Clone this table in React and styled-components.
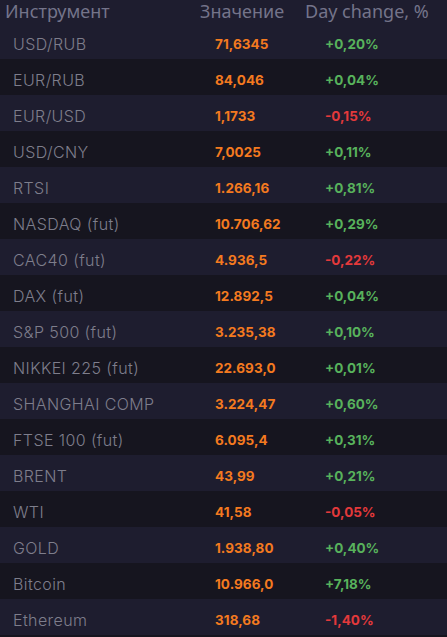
import React from "react";
import styled, { createGlobalStyle } from "styled-components";

const Global = createGlobalStyle`
  html, body { margin: 0; padding: 0; background: #16151f; }
  body { width: 447px; height: 637px; overflow: hidden; }
`;

const Table = styled.div`
  display: flex;
  flex-direction: column;
  width: 447px;
  background: #16151f;
`;

const Header = styled.div`
  display: grid;
  grid-template-columns: 195px 105px 1fr;
  height: 23px;
  box-sizing: border-box;
  padding-top: 2px;
  align-items: start;
  background: #1e1d2f;
  font-family: "Noto Sans", "DejaVu Sans", sans-serif;
  font-size: 18px;
  color: #74748a;
  white-space: nowrap;
  line-height: 18px;
`;

const HeadCell = styled.div`
  padding-left: ${(p) => p.$pl}px;
`;

const Row = styled.div`
  display: grid;
  grid-template-columns: 215px 110px 1fr;
  height: 36px;
  align-items: center;
  background: ${(p) => (p.$alt ? "#16151f" : "#1e1d2f")};
  white-space: nowrap;
  padding-top: 6px;
  box-sizing: border-box;
`;

const Name = styled.div`
  padding-left: 13px;
  font-family: Inter, "Noto Sans", sans-serif;
  font-weight: 300;
  font-size: 16px;
  letter-spacing: 0.4px;
  color: #7e7e8c;
`;

const Value = styled.div`
  font-family: Inter, "Noto Sans", sans-serif;
  font-weight: 700;
  font-size: 13.5px;
  letter-spacing: 0.05px;
  color: #f47a1f;
`;

const Change = styled.div`
  font-family: Inter, "Noto Sans", sans-serif;
  font-weight: 700;
  font-size: 13.5px;
  color: ${(p) => (p.$neg ? "#e3393b" : "#58b25c")};
`;

const data = [
  ["USD/RUB", "71,6345", "+0,20%"],
  ["EUR/RUB", "84,046", "+0,04%"],
  ["EUR/USD", "1,1733", "-0,15%"],
  ["USD/CNY", "7,0025", "+0,11%"],
  ["RTSI", "1.266,16", "+0,81%"],
  ["NASDAQ (fut)", "10.706,62", "+0,29%"],
  ["CAC40 (fut)", "4.936,5", "-0,22%"],
  ["DAX (fut)", "12.892,5", "+0,04%"],
  ["S&P 500 (fut)", "3.235,38", "+0,10%"],
  ["NIKKEI 225 (fut)", "22.693,0", "+0,01%"],
  ["SHANGHAI COMP", "3.224,47", "+0,60%"],
  ["FTSE 100 (fut)", "6.095,4", "+0,31%"],
  ["BRENT", "43,99", "+0,21%"],
  ["WTI", "41,58", "-0,05%"],
  ["GOLD", "1.938,80", "+0,40%"],
  ["Bitcoin", "10.966,0", "+7,18%"],
  ["Ethereum", "318,68", "-1,40%"],
];

export default function App() {
  return (
    <>
      <Global />
      <Table>
        <Header>
          <HeadCell $pl={5}>Инструмент</HeadCell>
          <HeadCell $pl={5}>Значение</HeadCell>
          <HeadCell $pl={5}>Day change, %</HeadCell>
        </Header>
        {data.map(([n, v, c], i) => (
          <Row key={n} $alt={i % 2 === 1}>
            <Name>{n}</Name>
            <Value>{v}</Value>
            <Change $neg={c.startsWith("-")}>{c}</Change>
          </Row>
        ))}
      </Table>
    </>
  );
}
